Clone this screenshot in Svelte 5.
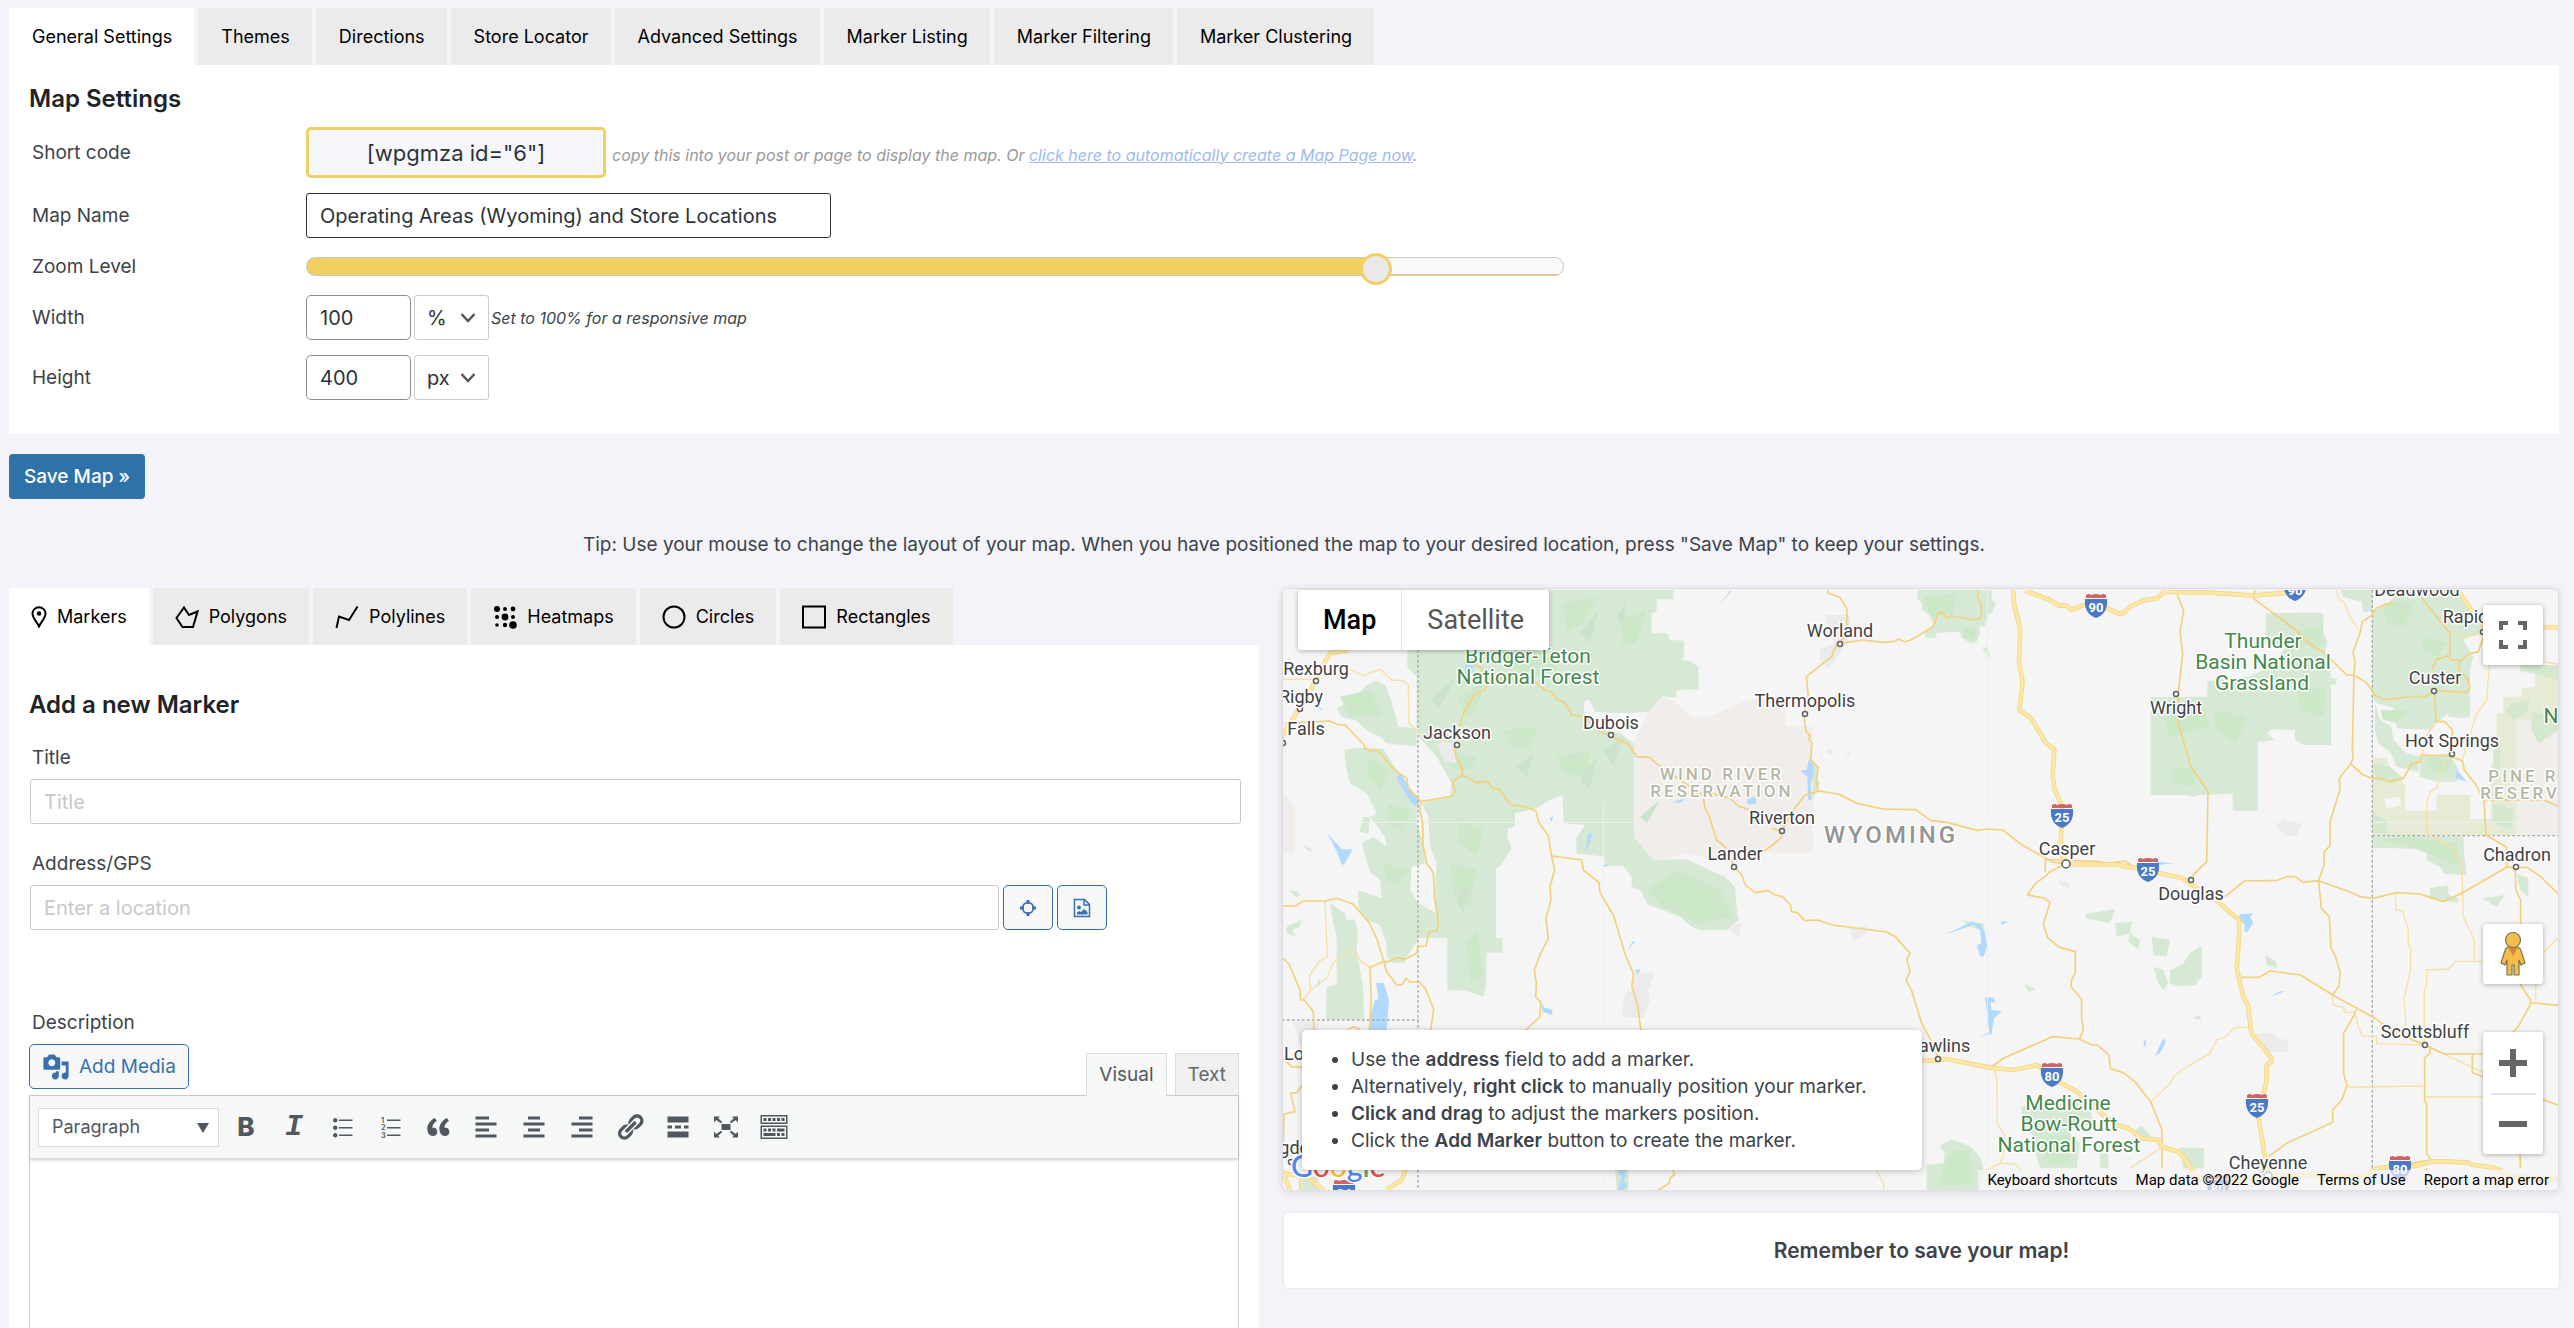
<script>
  const settingsTabs = [
    'General Settings', 'Themes', 'Directions', 'Store Locator',
    'Advanced Settings', 'Marker Listing', 'Marker Filtering', 'Marker Clustering'
  ];
  const featureTabs = ['Markers', 'Polygons', 'Polylines', 'Heatmaps', 'Circles', 'Rectangles'];

  let activeSetting = $state('General Settings');
  let activeFeature = $state('Markers');
  let mapName = $state('Operating Areas (Wyoming) and Store Locations');
  let zoom = $state(86);
  let width = $state('100');
  let height = $state('400');

  const heatDots = [
    [3, 3, 3], [11, 3, 2], [19, 3, 2.4],
    [3, 11, 2], [11, 11, 3.4], [19, 11, 2],
    [3, 19, 1.8], [11, 19, 2.2], [19, 19, 3.8]
  ];

  const tools = [
    { name: 'Bold', letter: 'B' },
    { name: 'Italic', letter: 'I' },
    { name: 'Bulleted list', d: 'M5.5 7C4.67 7 4 6.33 4 5.5 4 4.68 4.67 4 5.5 4 6.32 4 7 4.68 7 5.5 7 6.33 6.32 7 5.5 7zM8 5h9v1H8V5zm-2.5 7c-.83 0-1.5-.67-1.5-1.5C4 9.68 4.67 9 5.5 9c.82 0 1.5.68 1.5 1.5 0 .83-.68 1.5-1.5 1.5zM8 10h9v1H8v-1zm-2.5 7c-.83 0-1.5-.67-1.5-1.5 0-.82.67-1.5 1.5-1.5.82 0 1.5.68 1.5 1.5 0 .83-.68 1.5-1.5 1.5zM8 15h9v1H8v-1z' },
    { name: 'Numbered list', numbers: true, d: 'M8 5h9v1H8V5zM8 10h9v1H8v-1zM8 15h9v1H8v-1z' },
    { name: 'Blockquote', d: 'M9.49 13.22c0-.74-.2-1.38-.61-1.9-.62-.78-1.83-.88-2.53-.72-.29-1.65 1.11-3.75 2.92-4.65L7.88 4c-2.73 1.3-5.42 4.28-4.96 8.05C3.21 14.43 4.59 16 6.54 16c.85 0 1.56-.25 2.12-.75s.83-1.18.83-2.03zm8.05 0c0-.74-.2-1.38-.61-1.9-.63-.78-1.83-.88-2.53-.72-.29-1.65 1.11-3.75 2.92-4.65L15.93 4c-2.73 1.3-5.41 4.28-4.95 8.05.29 2.38 1.66 3.95 3.61 3.95.85 0 1.56-.25 2.12-.75s.83-1.18.83-2.03z' },
    { name: 'Align left', d: 'M12 5V3H3v2h9zm5 4V7H3v2h14zm-5 4v-2H3v2h9zm5 4v-2H3v2h14z' },
    { name: 'Align center', d: 'M14 5V3H6v2h8zm3 4V7H3v2h14zm-3 4v-2H6v2h8zm3 4v-2H3v2h14z' },
    { name: 'Align right', d: 'M17 5V3H8v2h9zm0 4V7H3v2h14zm0 4v-2H8v2h9zm0 4v-2H3v2h14z' },
    { name: 'Insert link', d: 'M17.74 2.76c1.68 1.69 1.68 4.41 0 6.1l-1.53 1.52c-1.12 1.12-2.7 1.47-4.14 1.09l2.62-2.61.76-.77.76-.76c.84-.84.84-2.2 0-3.04-.84-.85-2.2-.85-3.04 0l-.77.76-3.38 3.38c-.37-1.44-.02-3.02 1.1-4.14l1.52-1.53c1.69-1.68 4.42-1.68 6.1 0zM8.59 13.43l5.34-5.34c.42-.42.42-1.1 0-1.52-.44-.43-1.13-.39-1.53 0l-5.33 5.34c-.42.42-.42 1.1 0 1.52.44.43 1.13.39 1.52 0zm-.76 2.29l4.14-4.15c.38 1.44.03 3.02-1.09 4.14l-1.52 1.53c-1.69 1.68-4.41 1.68-6.1 0-1.68-1.68-1.68-4.42 0-6.1l1.53-1.52c1.12-1.12 2.7-1.47 4.14-1.1l-4.14 4.15c-.85.84-.85 2.2 0 3.05.84.84 2.2.84 3.04 0z' },
    { name: 'Read more', d: 'M17 7V3H3v4h14zM6 11V9H3v2h3zm6 0V9H8v2h4zm5 0V9h-3v2h3zm0 6v-4H3v4h14z' },
    { name: 'Fullscreen', d: 'M7 8h6v4H7zM2 3h4L4.800 4.200 7.500 6.600 6.600 7.500 3.500 5.300 2 7zM18 3h-4l1.200 1.200-2.700 2.400.9.9 3.100-2.200L18 7zM2 17h4l-1.200-1.200 2.700-2.400-.9-.9-3.100 2.200L2 13zM18 17h-4l1.200-1.200-2.700-2.400.9-.9 3.100 2.200L18 13z' },
    { name: 'Toolbar toggle', d: 'M19 2v6H1V2h18zm-1 5V3H2v4h16zM5 4v2H3V4h2zm3 0v2H6V4h2zm3 0v2H9V4h2zm3 0v2h-2V4h2zm3 0v2h-2V4h2zm2 5v9H1V9h18zm-1 8v-7H2v7h16zM5 11v2H3v-2h2zm3 0v2H6v-2h2zm3 0v2H9v-2h2zm6 0v2h-5v-2h5zm-6 3v2H3v-2h8zm3 0v2h-2v-2h2zm3 0v2h-2v-2h2z' }
  ];

  // Map features use a survey grid three units to the pixel, starting at (36, 60).
  const px = (u) => Math.round((u - 36) / 3);
  const py = (v) => Math.round((v - 60) / 3);

  const forests = [
    'M412 60H1210V88H1160V125L1145 130V190L1190 190 1200 210 1242 212V260L1235 268 1265 275 1285 290V358L1220 360V383L1180 378 1135 425 1040 430 975 425 957 388 940 395 945 440 1000 480 1050 490 1092 520V800L1150 870 1250 868 1330 905 1365 920 1395 950 1400 1015 1406 1050 1370 1080H1290L1265 1070 1230 1040 1180 1020 1135 1005 1110 960 1085 950V920L1060 888H1005L1003 860 920 850 918 805 945 765 880 760 878 675 840 690 800 715 735 730V770L715 775 712 800 725 835 690 890 678 895V1104H698V1148H650L648 1240 640 1280 590 1262 532 1260V1104H445V1000L500 1030 495 960 500 880 480 830 475 740 455 700 540 680 545 640 500 560 445 500V475L385 470 362 385 345 345 320 333 290 345 260 380 200 415 215 440 260 452 290 480 330 500 350 520 440 530V320L412 290Z',
    'M223 540L260 533 340 536 380 600 410 640 440 700V760L460 820 465 880 425 890 420 960 445 1000V1110L410 1160 405 1178H370L350 1160V1120L330 1065 290 1050 265 1010V960L335 985 330 930 300 905 275 820 310 800 350 830 360 920 345 800 300 740 320 730 290 670 240 640 230 600Z',
    'M280 740L300 740 295 790 268 785ZM57 962L78 962 92 975 80 982ZM50 1070L95 1050 90 1070 65 1080 80 1100 50 1090ZM100 825L130 840 120 846Z',
    'M180 998L225 1030 230 1050 255 1050 264 1090 260 1140 280 1260 282 1348 168 1348 170 1250 200 1245 200 1100 190 1060Z',
    'M1942 60H2165V90L2178 98 2168 125 2152 135 2145 168 2128 170 2130 190 2120 215 2105 220 2075 205 2070 185 2000 188 1998 203H1965V185L1990 165 1980 135 1955 120V100L1942 85ZM2138 238L2152 228 2162 268Z',
    'M1575 598L1605 585 1620 560 1645 600 1640 625 1650 640 1615 720 1605 650 1590 640Z',
    'M2987 130L3160 128V185L3172 215 3165 250 3180 255 3182 325 3200 328 3198 343 3183 345V525H3100L3075 510V480L3005 478 2990 490 3015 510 2963 516V722H2888V672L2780 675 2770 682 2750 675H2642V382L2812 380V333L2880 330 2935 320 2980 300 3010 290 3050 225 2987 220Z',
    'M3307 130L3315 120 3360 95 3380 60H3570L3600 120 3640 190 3600 200 3580 210 3610 260 3600 300V440L3580 445 3535 440V430L3505 455 3485 480 3380 475 3372 415 3320 400 3307 380ZM3210 60H3307V125L3280 125 3275 95 3220 80Z',
    'M3315 400L3330 450 3365 470 3370 510 3410 550 3450 560 3445 605 3380 590 3360 545 3325 520 3315 480ZM3450 560L3540 550 3565 600 3560 635H3500L3450 620Z',
    'M3307 797H3580L3583 860 3590 915 3525 912 3510 890 3470 870V840L3380 835H3307ZM3480 955L3535 945V975L3565 985 3565 1000 3480 985ZM3740 910L3775 925V980L3750 960Z',
    'M1970 1785L2020 1780 2025 1750 2008 1730 2045 1708 2100 1728 2130 1760 2140 1795 2130 1860H1970ZM2255 1610L2280 1600H2440L2465 1630V1660L2390 1680 2430 1720 2420 1795H2310L2300 1760 2290 1700 2255 1640ZM2490 1750H2515V1795H2490Z',
    'M2445 1032L2535 1018 2520 1060 2450 1045ZM2535 1060L2585 1055 2580 1090 2540 1100ZM2580 1090L2610 1110 2605 1140 2575 1115ZM2262 1243L2297 1255 2278 1267ZM2072 1050L2140 1060 2145 1085 2100 1070Z',
    'M2645 1100L2700 1110 2690 1160 2650 1155ZM2700 1200L2740 1180 2760 1150 2795 1125V1220L2775 1245 2730 1250 2700 1240ZM2650 1190L2680 1200 2695 1240 2680 1260 2665 1240ZM2985 1155L3020 1175V1195L2990 1185ZM2730 1733H2802V1795H2740ZM2595 1680L2615 1667 2645 1700H2600ZM3635 985L3705 975 3680 1010ZM2770 1345L2785 1335 2797 1350Z',
    'M1035 1800H1075V1860H1040ZM95 1820H145V1860H95Z'
  ];
  const woods = [
    'M560 380L640 340 620 420 590 440ZM700 260L820 240 860 300 760 330ZM880 100L980 80 940 160 890 190ZM1050 150L1130 120 1100 220 1060 230ZM520 540L620 560 600 600 540 590ZM700 480L800 470 780 540 720 530ZM860 560L960 540 950 620 880 610ZM560 740L640 780 620 860 570 820ZM540 880L620 900 600 1010 550 980ZM620 1080L640 1220 600 1240 590 1120ZM300 560L360 600 330 660 290 620ZM350 700L420 720 400 790 360 770ZM340 880L420 900 380 950 350 930ZM1130 960L1220 900 1350 960 1390 1040 1280 1060 1180 1010ZM210 380L300 360 340 440 240 440Z',
    'M2680 440L2800 400 2820 470 2700 500ZM2830 420L2930 440 2900 520 2840 480ZM3080 180L3160 170 3150 230 3090 220ZM3080 360L3170 350 3160 440 3090 420ZM2700 600L2780 590 2770 650 2710 640ZM3340 100L3440 90 3400 170 3350 160ZM3450 200L3530 220 3500 260 3460 240ZM3330 420L3420 420 3380 460 3340 450ZM3470 560L3550 570 3530 610 3480 600ZM3320 810L3420 800 3560 820 3570 890 3500 860 3420 830ZM1960 80L2060 70 2050 130 1980 140ZM2080 170L2120 180 2110 210 2080 200ZM2040 1740L2100 1740 2110 1840 2000 1850ZM2320 1700L2400 1690 2400 1780 2330 1780Z'
  ];
  const shades = [
    'M930 190L985 120 960 220ZM1040 140L1070 90 1060 170ZM480 390L560 320 510 410ZM1000 540L1060 500 1030 590ZM930 630L980 560 960 660ZM740 590L790 550 770 620ZM560 990L600 930 580 1030ZM1110 740L1170 690 1130 760Z',
    'M1665 135H1740V200L1710 250 1675 298 1650 270V240L1690 220ZM1065 1270L1090 1260V1208H1155L1135 1260 1140 1290 1120 1345 1055 1340ZM2955 1390H3010L3020 1405 3053 1410V1445H2990ZM3017 770L3040 745 3095 765 3080 797H3050ZM1665 545L1682 533 1687 552ZM1722 560L1745 540 1740 556ZM1375 1075L1415 1058 1408 1105ZM1738 1072L1790 1068 1790 1090 1750 1115ZM2365 930L2400 942 2395 953 2375 948ZM70 1355H150L130 1420H90Z'
  ];
  const reservations = [
    'M1092 520L1135 425 1180 375 1220 400 1265 440H1320L1420 395 1460 385H1545V470H1628V850L1400 850 1320 868 1250 850 1190 868 1150 870 1092 800Z',
    'M3740 450H3865V795H3740ZM36 660L75 710V848H36Z'
  ];
  const grasslands =
    'M3307 562L3350 565 3360 590 3405 645V722H3500V675H3600V747H3663V580L3680 575V430H3700V380H3755V355L3795 350V312L3750 305V285L3865 290V450H3740V795H3307Z';
  const grassWoods =
    'M3307 580L3360 590 3400 625 3370 640 3320 630ZM3307 730L3350 750 3350 790H3307ZM3720 400L3780 390 3770 430 3730 450 3710 425ZM3785 430L3865 425V480L3805 520 3785 480ZM3750 285H3865V330L3760 300ZM3670 700L3730 720 3725 780 3670 760ZM3670 540L3690 530V600L3670 610Z';
  const waters = [
    'M378 618L395 615 410 640 445 690V710L425 700 400 660ZM172 790L215 838 248 838 222 885 215 882 198 840ZM840 745L850 737 845 757ZM945 850L955 790 965 790 960 820ZM995 888L1020 880 1008 890ZM1205 698L1250 682 1230 698ZM585 280H608V310H585ZM143 408L157 418 150 420Z',
    'M318 1238L342 1240 357 1290 350 1380H300L303 1330 315 1290 325 1288ZM812 1295L822 1312 848 1320 845 1335 818 1325ZM1072 1142L1088 1113 1095 1115ZM1095 1200L1113 1198 1103 1212ZM140 1245L152 1222 145 1250ZM1045 1800H1068L1062 1830 1072 1850 1060 1860H1042L1055 1825Z',
    'M1590 602L1610 600 1618 565 1630 575V615L1622 640 1625 690 1615 690 1612 620ZM1432 685L1458 680V702H1432ZM1345 108L1380 62H1385ZM2020 1092L2055 1080 2085 1065 2105 1055 2130 1062 2145 1090 2152 1130 2140 1160 2130 1158 2120 1125 2135 1120 2130 1080 2110 1065 2050 1085ZM2192 1055L2218 1053 2195 1064ZM2145 1282L2170 1283 2177 1297 2160 1297 2165 1320 2195 1324 2172 1345 2165 1392 2130 1400 2158 1388Z',
    'M2910 1033L2950 1030 2940 1040 2950 1058 2930 1088 2922 1080 2925 1065 2905 1045ZM2870 1000L2900 1018ZM2655 1458L2680 1405 2688 1415 2670 1450ZM2620 1415L2630 1408 2625 1435ZM3000 1282L3025 1265 3045 1263ZM3560 600L3590 635 3558 625ZM2655 875L2710 880 2670 884ZM3690 98L3710 106Z'
  ];

  const lanes = [
    'M40 328H130M240 298L280 317 330 298 365 330 398 332 415 342 417 460 455 495 520 515',
    'M165 993L172 1160 150 1172 117 1218 122 1260 170 1225 190 1178 235 1145 255 1147 275 1175 300 1192M122 1260L100 1290',
    'M2172 1490L2180 1530 2182 1660 2203 1695 2198 1760 2190 1780 2235 1782 2260 1810M2190 1780L2130 1810M1820 1802L1843 1845 1838 1860',
    'M2642 1595L2702 1540 2710 1520 2735 1500 2820 1450 2840 1410 2872 1397 2892 1373 2940 1372M3231 1547L3240 1551 3460 1548M3464 1581H3640',
    'M3188 1275L3190 1305 3220 1312 3225 1327 3255 1327 3265 1370 3277 1397 3320 1400V1421L3465 1425 3640 1508',
    'M3377 970V1020L3398 1022 3415 1078V1125L3422 1135V1200L3402 1285 3408 1370M3463 1420V1260L3470 1245V1200L3535 1197 3558 1174H3640M3613 1174V1110L3580 1040 3575 880 3540 830 3475 797',
    'M3863 1105L3820 1147M3797 1230V1290M3200 60L3205 85 3225 100 3240 140 3265 180M3500 455L3470 495 3455 560M3525 570L3500 655 3480 665 3470 700V797M3575 575L3620 430 3650 390 3660 260',
    'M2580 1795L2670 1735M3540 180L3590 200 3640 190M3760 265L3865 283'
  ];
  const roads = [
    'M45 460L180 453 205 465 225 465 283 525 285 535 303 543 323 541 370 597 410 625 415 655 453 695 548 678 555 660 547 635 577 615 620 638 652 634 668 655 688 658 722 705 770 711 798 723 806 757 835 797 845 858 935 870 940 900 987 938 990 968 1030 1035 1068 1160 1090 1210 1086 1250 1103 1305 1113 1385',
    'M453 695L448 712 458 760 459 825 470 880 490 908 494 985 506 1060 500 1083H478L468 1128 443 1130 440 1150 405 1168 380 1163 355 1175H340L300 1192 304 1290 298 1380',
    'M577 615V597L558 560 552 525M570 470L580 430 615 372 645 360 655 335 630 290 610 285M680 325H780L825 360 842 363 860 388 885 398 905 435 945 440 990 485 1075 522 1100 560 1138 562 1165 585 1245 640 1300 680 1305 715 1318 740 1340 810 1370 835 1392 890',
    'M845 858L854 900 840 950 843 990 828 1045 835 1105 812 1150 793 1200 799 1240 797 1282 812 1295 810 1340 768 1380',
    'M40 1008L78 1008 97 993 165 993 200 985 250 1003 297 1057 320 1105 342 1175 350 1205 380 1245 397 1243 408 1224 420 1236H448L467 1257 491 1318 482 1380M40 1165L57 1182 90 1260 92 1290H103L130 1325 132 1380M40 1465L65 1490 97 1492M97 1545L80 1568 62 1570 75 1625 42 1632 40 1720M90 1820V1860M1210 1800L1213 1813 1200 1825 1198 1840 1165 1860M235 1378L250 1370 270 1378',
    'M1673 60L1675 70 1710 82 1731 118 1730 190 1710 220 1702 218 1685 260 1609 320 1615 375 1603 430 1603 450 1608 485 1620 497 1617 510 1626 517 1622 570 1645 592 1639 635 1645 663 1605 675 1570 720 1535 783 1533 805 1485 842 1410 870M1710 220L1780 210 1838 217 1875 214 1885 207 1905 216 1922 210 1990 170 2005 128H2018L2030 145 2042 138 2115 150 2135 142 2133 100 2122 80 2125 60',
    'M1645 663L1705 672 1760 700 1840 717 1937 719 1982 751 2030 757 2122 781 2152 777 2198 780 2258 826 2350 877 2388 880 2340 905 2325 920 2297 940 2272 975 2322 984 2340 998 2320 1063 2333 1103 2368 1132 2416 1145V1208L2405 1230 2403 1250 2435 1288V1345L2440 1380 2428 1408',
    'M1535 783L1505 775M1435 718L1405 708 1380 685 1325 670H1290M1392 890L1415 915 1427 947 1457 968 1495 962 1515 975 1537 980 1562 1005 1564 1025 1582 1028 1604 1052 1642 1050 1688 1065 1850 1086 1878 1102 1920 1150 1910 1168 1920 1205 1908 1231 1925 1262 1955 1360 1985 1415 2005 1465',
    'M2168 1488L2200 1465 2347 1400 2428 1407 2465 1425H2482L2516 1455 2522 1496 2560 1508 2595 1535 2642 1595 2676 1680V1795M2326 905V870L2380 870 2490 875 2510 880 2565 873 2590 890',
    'M2720 70L2741 122 2730 185 2738 250 2725 370V460L2763 592 2814 663 2810 875 2765 920M2950 85L3075 178 3105 210 3170 255 3230 315H3252L3290 338 3315 375 3345 389 3442 378 3462 382 3493 362 3590 368 3600 355 3595 330 3565 300 3568 275 3600 250 3625 245 3645 190',
    'M2958 60L2945 80M3370 95L3318 115 3307 135 3277 155 3270 190 3249 248 3255 275 3252 315 3247 540 3250 560 3242 582 3208 625 3210 658 3180 757V827L3163 845 3162 885 3146 932 3154 1015 3178 1040 3183 1135 3195 1155 3210 1205 3207 1248 3188 1275',
    'M3242 582L3280 615 3308 625H3335L3355 635 3400 625 3425 582 3450 575 3455 555 3540 558 3577 572 3583 600 3615 640 3642 690 3648 795 3710 832V892M3642 690H3820L3865 708M3455 85L3540 190V255L3500 268 3485 300M3530 255L3545 270H3568M3493 365L3498 455H3525L3547 480 3543 550',
    'M2865 980L2923 933 3020 931 3050 920H3075L3100 937 3146 932 3250 970 3270 980 3310 985 3378 968 3450 972 3520 995 3575 970 3710 892H3770L3810 918 3865 972M3735 892L3738 960 3752 990V1245L3782 1290 3780 1305 3745 1370 3640 1480M3782 1298L3865 1306',
    'M2915 1222H2968L3000 1203 3092 1215 3188 1275 3315 1345 3380 1390 3465 1425 3523 1452H3640M3258 1320L3250 1340 3221 1390V1510L3231 1547 3215 1590 3188 1620V1657L3050 1720 2995 1760M3480 1430V1450L3464 1463V1595L3470 1600V1750L3482 1768M3607 1452V1508L3865 1606M3750 1750L3752 1795M3470 1795V1860M3420 1780L3480 1770H3540'
  ];
  const highways = [
    'M235 240L180 250 165 275 135 335 88 415 30 510M36 1800L60 1860M40 1810L110 1820 160 1860M410 1790L395 1830 350 1860',
    'M2230 60L2232 100 2251 180 2247 280 2258 335 2248 420 2283 445 2330 522 2353 537 2348 615 2354 660 2375 705 2372 850 2388 880 2420 884 2540 884 2610 897 2740 925 2780 955 2845 995 2907 1050 2908 1090 2900 1195 2920 1280 2935 1310 2944 1390 3005 1465V1475L2990 1485V1530L2965 1640 2985 1760 2995 1810',
    'M2265 62L2340 90 2365 107H2390L2405 120 2440 105 2510 115 2545 130H2560L2580 110 2625 90 2660 86 2683 65 2820 68 2950 77 3050 68M3570 70L3600 115 3640 168 3865 172',
    'M1900 1470L1990 1472 2030 1467 2160 1493 2232 1500 2300 1485 2375 1540 2420 1565 2495 1630 2540 1665 2575 1675 2615 1705 2665 1710 2675 1730 2725 1745 2740 1760 2780 1820 2880 1840 2990 1815H3110L3280 1820 3320 1795 3380 1788H3440L3480 1775H3540L3595 1778 3610 1785 3670 1792 3730 1820 3865 1830'
  ];

  const towns = [
    { name: 'Rexburg', x: 138, y: 314, cx: 138, cy: 332 },
    { name: 'Rigby', x: 92, y: 399, cx: 90, cy: 418 },
    { name: 'Falls', x: 108, y: 494, cx: 40, cy: 520 },
    { name: 'Jackson', x: 562, y: 506, cx: 560, cy: 525 },
    { name: 'Dubois', x: 1024, y: 476, cx: 1023, cy: 496 },
    { name: 'Worland', x: 1710, y: 201, cx: 1709, cy: 222 },
    { name: 'Thermopolis', x: 1606, y: 411, cx: 1606, cy: 431 },
    { name: 'Riverton', x: 1535, y: 763, cx: 1536, cy: 783 },
    { name: 'Lander', x: 1394, y: 870, cx: 1392, cy: 890 },
    { name: 'Casper', x: 2390, y: 856, cx: 2388, cy: 881, big: true },
    { name: 'Deadwood', x: 3442, y: 77 },
    { name: 'Rapid City', x: 3640, y: 160, cx: 3640, cy: 185 },
    { name: 'Wright', x: 2719, y: 433, cx: 2719, cy: 372 },
    { name: 'Custer', x: 3495, y: 343, cx: 3493, cy: 364 },
    { name: 'Hot Springs', x: 3546, y: 532, cx: 3545, cy: 553 },
    { name: 'Chadron', x: 3741, y: 872, cx: 3739, cy: 892 },
    { name: 'Douglas', x: 2764, y: 990, cx: 2764, cy: 930 },
    { name: 'Scottsbluff', x: 3466, y: 1405, cx: 3466, cy: 1426 },
    { name: 'Cheyenne', x: 2995, y: 1796, cx: 2994, cy: 1818, big: true },
    { name: 'Rawlins', x: 2008, y: 1445, cx: 2004, cy: 1466 },
    { name: 'Logan', x: 118, y: 1470 },
    { name: 'Ogden', x: 70, y: 1752, cx: 62, cy: 1776 }
  ];
  const parks = [
    { name: 'Bridger-Teton', x: 774, y: 278 },
    { name: 'National Forest', x: 774, y: 341 },
    { name: 'Thunder', x: 2980, y: 233 },
    { name: 'Basin National', x: 2978, y: 296 },
    { name: 'Grassland', x: 2976, y: 359 },
    { name: 'Medicine', x: 2395, y: 1620 },
    { name: 'Bow-Routt', x: 2397, y: 1683 },
    { name: 'National Forest', x: 2397, y: 1747 },
    { name: 'N', x: 3842, y: 458 }
  ];
  const lands = [
    { name: 'WIND RIVER', x: 1355, y: 630 },
    { name: 'RESERVATION', x: 1355, y: 681 },
    { name: 'PINE RIDGE', x: 3834, y: 636 },
    { name: 'RESERVATION', x: 3846, y: 687 }
  ];
  const shields = [
    { n: '90', x: 2479, y: 107 }, { n: '90', x: 3075, y: 58 },
    { n: '25', x: 2375, y: 738 }, { n: '25', x: 2634, y: 899 },
    { n: '80', x: 2346, y: 1515 }, { n: '25', x: 2962, y: 1609 },
    { n: '80', x: 3390, y: 1793 }, { n: '80', x: 2845, y: 1850 },
    { n: '84', x: 222, y: 1866 }
  ];
</script>

{#snippet featureIcon(name)}
  {#if name === 'Markers'}
    <svg class="pin" viewBox="0 0 16 22" aria-hidden="true"><path d="M8 20.500C6 16 1.500 12 1.500 7.500a6.500 6.200 0 0 1 13 0C14.500 12 10 16 8 20.500z" fill="none" stroke="#000" stroke-width="2" /><circle cx="8" cy="7.500" r="2.300" /></svg>
  {:else}
    <svg class="shape" viewBox="0 0 24 24" aria-hidden="true">
      {#if name === 'Polygons'}
        <path d="M9 2.500L14 10 22.500 6.500 18 22H7.500L1.500 13Z" fill="none" stroke="#000" stroke-width="2" />
      {:else if name === 'Polylines'}
        <path d="M1.500 23L4 11.500 14 15 22.500 1.500" fill="none" stroke="#000" stroke-width="2" />
      {:else if name === 'Heatmaps'}
        {#each heatDots as [x, y, r]}<circle cx={x + 1} cy={y + 1} {r} />{/each}
      {:else if name === 'Circles'}
        <circle cx="12" cy="12" r="10.500" fill="none" stroke="#000" stroke-width="2" />
      {:else}
        <rect x="1" y="1.500" width="22" height="21" fill="none" stroke="#000" stroke-width="2" />
      {/if}
    </svg>
  {/if}
{/snippet}

{#snippet chevron()}
  <svg class="chevron" viewBox="0 0 16 12" aria-hidden="true"><path d="M1.500 2L8 9 14.500 2" fill="none" stroke="#555" stroke-width="2.500" /></svg>
{/snippet}

<div class="page">
  <nav class="tabs" aria-label="Map settings">
    {#each settingsTabs as tab}
      <button type="button" class="tab" class:active={tab === activeSetting} onclick={() => (activeSetting = tab)}>{tab}</button>
    {/each}
  </nav>

  <section class="panel settings">
    <h2>Map Settings</h2>
    <div class="rows">
      <div class="row">
        <label for="shortcode">Short code</label>
        <input id="shortcode" class="shortcode" type="text" readonly value={'[wpgmza id="6"]'} />
        <em class="hint muted">copy this into your post or page to display the map. Or <a href="#create">click here to automatically create a Map Page now</a>.</em>
      </div>
      <div class="row">
        <label for="map-name">Map Name</label>
        <input id="map-name" class="field name" type="text" bind:value={mapName} />
      </div>
      <div class="row zoom-row">
        <label for="zoom">Zoom Level</label>
        <input id="zoom" class="slider" type="range" min="0" max="100" bind:value={zoom} style="--fill: {zoom}%" />
      </div>
      <div class="row">
        <label for="map-width">Width</label>
        <input id="map-width" class="field size" type="text" bind:value={width} />
        <span class="pick"><select aria-label="Width unit"><option>%</option><option>px</option></select>{@render chevron()}</span>
        <em class="hint">Set to 100% for a responsive map</em>
      </div>
      <div class="row">
        <label for="map-height">Height</label>
        <input id="map-height" class="field size" type="text" bind:value={height} />
        <span class="pick"><select aria-label="Height unit"><option>px</option><option>%</option></select>{@render chevron()}</span>
      </div>
    </div>
  </section>

  <button type="button" class="save">Save Map »</button>
  <p class="tip">Tip: Use your mouse to change the layout of your map. When you have positioned the map to your desired location, press "Save Map" to keep your settings.</p>

  <div class="columns">
    <div class="left">
      <nav class="tabs" aria-label="Map features">
        {#each featureTabs as tab}
          <button type="button" class="tab feature" class:active={tab === activeFeature} onclick={() => (activeFeature = tab)}>
            {@render featureIcon(tab)}{tab}
          </button>
        {/each}
      </nav>
      <section class="panel marker">
        <h2>Add a new Marker</h2>
        <label class="above" for="title">Title</label>
        <input id="title" class="field soft" type="text" placeholder="Title" />
        <label class="above next" for="address">Address/GPS</label>
        <div class="address">
          <input id="address" class="field soft" type="text" placeholder="Enter a location" />
          <button type="button" class="outline square" aria-label="Use my location">
            <svg viewBox="0 0 18 18" aria-hidden="true"><circle cx="9" cy="9" r="5.500" fill="none" stroke="currentColor" stroke-width="1.500" /><path d="M9 1v4M9 13v4M1 9h4M13 9h4" stroke="currentColor" stroke-width="3" /></svg>
          </button>
          <button type="button" class="outline square" aria-label="Read location from a photo">
            <svg viewBox="0 0 18 20" aria-hidden="true"><path d="M1.500 1.500h10l5 5v12h-15zM11 1.500V7h5.500" fill="none" stroke="currentColor" stroke-width="1.500" /><circle cx="6" cy="9.500" r="2" fill="currentColor" /><path d="M4 16.500v-2l2-1.500 2 1 3-3 3.500 3v2.500z" fill="currentColor" /></svg>
          </button>
        </div>
        <label class="above last" for="description">Description</label>
        <div class="editor-head">
          <button type="button" class="outline media">
            <svg viewBox="0 0 20 20" aria-hidden="true"><path fill="currentColor" d="M13 11V4c0-.55-.45-1-1-1h-1.670L9 1H5L3.670 3H2c-.55 0-1 .45-1 1v7c0 .55.45 1 1 1h10c.55 0 1-.45 1-1zM7 4.500c1.380 0 2.500 1.120 2.500 2.500S8.380 9.500 7 9.500 4.500 8.380 4.500 7 5.620 4.500 7 4.500zM14 6h5v10.500c0 1.380-1.120 2.500-2.500 2.500S14 17.880 14 16.500s1.120-2.500 2.500-2.500c.17 0 .34.02.5.05V9h-3V6zm-4 8.050V13h2v3.500c0 1.380-1.120 2.500-2.500 2.500S7 17.880 7 16.500 8.120 14 9.500 14c.17 0 .34.02.5.05z" /></svg>Add Media
          </button>
          <div class="modes">
            <button type="button" class="mode on">Visual</button>
            <button type="button" class="mode">Text</button>
          </div>
        </div>
        <div class="editor">
          <div class="toolbar">
            <span class="pick para"><select aria-label="Text style"><option>Paragraph</option><option>Heading 1</option></select><svg class="arrow" viewBox="0 0 12 10" aria-hidden="true"><path d="M0 0h12L6 10z" fill="#50575e" /></svg></span>
            {#each tools as tool}
              <button type="button" class="tool" aria-label={tool.name}>
                {#if tool.letter}
                  <span class="letter" class:slanted={tool.letter === 'I'}>{tool.letter}</span>
                {:else}
                  <svg viewBox="0 0 20 20" aria-hidden="true">
                    <path d={tool.d} />
                    {#if tool.numbers}
                      <g class="digits"><text x="4" y="7">1</text><text x="4" y="12">2</text><text x="4" y="17">3</text></g>
                    {/if}
                  </svg>
                {/if}
              </button>
            {/each}
          </div>
          <textarea id="description"></textarea>
        </div>
      </section>
    </div>

    <div class="right">
      <div class="map">
        <svg class="canvas" viewBox="1 0 1275 600" preserveAspectRatio="xMinYMin slice" role="img" aria-label="Map of Wyoming">
          <g transform="scale(.33333) translate(-36 -60)">
            <path d={grasslands} fill="#e6ebd5" />
            {#each forests as d}<path {d} fill="#d6e9d4" />{/each}
            {#each reservations as d}<path {d} fill="#f0edea" />{/each}
            <path d="M3343 685L3390 680 3395 705 3350 715Z" fill="#f5f5f5" />
            {#each woods as d}<path {d} fill="#cde8c9" />{/each}
            <path d={grassWoods} fill="#d3e8cd" />
            <path d={shades[0]} fill="#cce2ca" />
            <path d={shades[1]} fill="#ebebeb" />
            <path d="M500 520L550 515 560 580 525 575Z" fill="#ebebeb" />
            {#each waters as d}<path {d} fill="#b1d9fd" />{/each}
            <path class="grid" d="M36 757H3865M1000 700V1860M2152 60V1860" />
            <path class="border" d="M444 60V1860M36 1350H444M3307 60V1860M3307 797H3865" />
            {#each lanes as d}<path {d} class="lane" />{/each}
            {#each roads as d}<path {d} class="road" />{/each}
            {#each highways as d}<path {d} class="casing" />{/each}
            {#each highways as d}<path {d} class="highway" />{/each}
          </g>
          {#each shields as s}
            <g transform="translate({px(s.x)} {py(s.y)})">
              <path d="M-10-11Q-7-13-5-11 0-13 5-11 7-13 10-11L10-8H-10Z" fill="#cc6664" />
              <path d="M-11-7H11C12 3 8 9 0 12-8 9-12 3-11-7Z" fill="#4a7ac6" />
              <text class="shield" y="6">{s.n}</text>
            </g>
          {/each}
          {#each towns as t}
            {#if t.cx}<circle class="dot" cx={px(t.cx)} cy={py(t.cy)} r={t.big ? 4 : 2.5} />{/if}
            <text class="town" x={px(t.x)} y={py(t.y)}>{t.name}</text>
          {/each}
          {#each parks as p}<text class="park" x={px(p.x)} y={py(p.y)}>{p.name}</text>{/each}
          {#each lands as l}<text class="land" x={px(l.x)} y={py(l.y)}>{l.name}</text>{/each}
          <text class="state" x={px(1863)} y={py(820)}>WYOMING</text>
          <text class="google" x="9" y="587"><tspan fill="#4f86ec">G</tspan><tspan fill="#dd5144">o</tspan><tspan fill="#f4bf3f">o</tspan><tspan fill="#4f86ec">g</tspan><tspan fill="#58a65c">l</tspan><tspan fill="#dd5144">e</tspan></text>
        </svg>

        <div class="types">
          <button type="button" class="on">Map</button><button type="button">Satellite</button>
        </div>
        <button type="button" class="control full" aria-label="Toggle fullscreen view">
          <svg viewBox="0 0 28 28" aria-hidden="true"><path d="M2 9V2h7M19 2h7v7M26 19v7h-7M9 26H2v-7" fill="none" stroke="#666" stroke-width="4" /></svg>
        </button>
        <div class="stack">
          <button type="button" class="control" aria-label="Street View">
            <svg class="man" viewBox="0 0 26 46" aria-hidden="true">
              <path d="M8 16L5.500 18 1 32l4 2 2-5v15h5V34h2v10h5V29l2 5 4-2-4.500-14-2.500-2z" fill="#f2bd4b" stroke="#7b7256" stroke-width="1.200" />
              <path d="M8 16h10l-5 9z" fill="#d9853b" />
              <circle cx="13" cy="9" r="7.500" fill="#f2bd4b" stroke="#7b7256" stroke-width="1.200" />
            </svg>
          </button>
          <div class="zooms">
            <button type="button" aria-label="Zoom in"><svg viewBox="0 0 28 28" aria-hidden="true"><path d="M0 14h28M14 0v28" stroke="#666" stroke-width="6" /></svg></button>
            <button type="button" aria-label="Zoom out"><svg viewBox="0 0 28 28" aria-hidden="true"><path d="M0 14h28" stroke="#666" stroke-width="6" /></svg></button>
          </div>
        </div>
        <ul class="help">
          <li>Use the <b>address</b> field to add a marker.</li>
          <li>Alternatively, <b>right click</b> to manually position your marker.</li>
          <li><b>Click and drag</b> to adjust the markers position.</li>
          <li>Click the <b>Add Marker</b> button to create the marker.</li>
        </ul>
        <div class="credits">
          <button type="button">Keyboard shortcuts</button>
          <span>Map data ©2022 Google</span>
          <a href="#terms">Terms of Use</a>
          <a href="#report">Report a map error</a>
        </div>
      </div>
      <p class="remember">Remember to save your map!</p>
    </div>
  </div>
</div>

<style>
  :global(body) {
    background: #f4f3f9;
  }
  .page {
    box-sizing: border-box;
    display: flex;
    flex-direction: column;
    min-height: 100vh;
    padding: 8px 15px 0 9px;
    color: #3c434a;
    font-family: Inter, "Liberation Sans", sans-serif;
    font-size: 19px;
    line-height: 28px;
  }
  .page *,
  .page *::before {
    box-sizing: border-box;
  }
  button,
  input,
  select,
  textarea {
    margin: 0;
    font: inherit;
    color: inherit;
  }
  button {
    padding: 0;
    border: 0;
    background: none;
    cursor: pointer;
    white-space: nowrap;
  }
  svg {
    display: block;
  }
  h2 {
    margin: 0;
    color: #1d2327;
    font-size: 24px;
    font-weight: 600;
    line-height: 32px;
  }
  .tabs {
    display: flex;
    gap: 4px;
  }
  .tab {
    display: flex;
    align-items: center;
    height: 57px;
    padding: 0 22px 0 23px;
    background: #ebebeb;
    color: #000;
    font-size: 18px;
    font-weight: 400;
  }
  .tab.active {
    background: #fff;
  }
  .feature {
    gap: 10px;
    padding: 0 22px;
  }
  .pin {
    width: 16px;
    height: 22px;
  }
  .shape {
    width: 24px;
    height: 24px;
  }
  .panel {
    background: #fff;
  }
  .settings {
    padding: 18px 20px 34px;
  }
  .rows {
    display: flex;
    flex-direction: column;
    gap: 15px;
    margin-top: 12px;
  }
  .row {
    display: flex;
    align-items: center;
  }
  .row label {
    width: 277px;
    padding-left: 3px;
  }
  .zoom-row {
    height: 27px;
  }
  .shortcode {
    width: 300px;
    height: 51px;
    border: 3px solid #f2cf61;
    border-radius: 5px;
    background: #f5f7fc;
    color: #2c3338;
    font-size: 22px;
    text-align: center;
  }
  .hint {
    margin-left: 2px;
    font-size: 16px;
  }
  .hint.muted {
    margin-left: 6px;
    padding-top: 4px;
    color: #999;
  }
  .hint a {
    color: #9dbaf0;
  }
  .field {
    height: 45px;
    padding: 0 13px;
    border: 1px solid #8c8f94;
    border-radius: 5px;
    background: #fff;
    color: #2c3338;
    font-size: 20px;
  }
  .field.name {
    width: 525px;
    border-color: #2c3338;
    border-radius: 3px;
  }
  .field.size {
    width: 105px;
    margin-right: 3px;
  }
  .field.soft {
    width: 100%;
    border-color: #c8c8c8;
    border-radius: 3px;
  }
  .field.soft::placeholder {
    color: #c8c8c8;
    opacity: 1;
  }
  .pick {
    position: relative;
    display: flex;
  }
  select {
    appearance: none;
    width: 75px;
    height: 45px;
    padding: 0 12px;
    border: 1px solid #ccc;
    border-radius: 3px;
    background: #fff;
    color: #2c3338;
    font-size: 20px;
  }
  .chevron,
  .arrow {
    position: absolute;
    top: 50%;
    right: 13px;
    width: 16px;
    height: 12px;
    margin-top: -6px;
    pointer-events: none;
  }
  .slider {
    appearance: none;
    width: 1258px;
    height: 19px;
    background: none;
  }
  .slider::-webkit-slider-runnable-track {
    height: 19px;
    border: 1px solid #c9c9c9;
    border-radius: 9px;
    background: linear-gradient(90deg, #f2cf61 var(--fill), transparent var(--fill)),
      linear-gradient(#f9f9f9 16px, #f2cf61 16px);
  }
  .slider::-webkit-slider-thumb {
    appearance: none;
    width: 32px;
    height: 32px;
    margin-top: -5px;
    border: 3px solid #f2cf61;
    border-radius: 50%;
    background: #e9e9e9;
  }
  .save {
    align-self: flex-start;
    height: 45px;
    margin-top: 20px;
    padding: 0 15px;
    border-radius: 4px;
    background: #2e72a8;
    color: #fff;
    font-weight: 500;
  }
  .tip {
    margin: 32px 0 29px;
    text-align: center;
  }
  .columns {
    display: grid;
    flex: 1;
    grid-template-columns: minmax(0, 1250fr) minmax(0, 1277fr);
    gap: 23px;
  }
  .left {
    display: flex;
    flex-direction: column;
  }
  .marker {
    display: flex;
    flex: 1;
    flex-direction: column;
    padding: 44px 20px 0;
  }
  .above {
    align-self: flex-start;
    margin: 23px 0 7px 3px;
  }
  .above.next {
    margin-top: 26px;
  }
  .above.last {
    margin-top: 79px;
  }
  .marker > .field,
  .address {
    margin-left: 1px;
    width: calc(100% + 1px);
  }
  .address {
    display: flex;
    gap: 4px;
    width: 89%;
  }
  .outline {
    display: flex;
    align-items: center;
    justify-content: center;
    height: 45px;
    border: 1px solid #2f6fb0;
    border-radius: 5px;
    background: #f6f7f7;
    color: #3a70b0;
  }
  .square {
    flex: 0 0 50px;
  }
  .square svg {
    width: 18px;
    height: 20px;
  }
  .media {
    gap: 9px;
    padding: 0 12px;
  }
  .media svg {
    width: 28px;
    height: 28px;
  }
  .editor-head {
    display: flex;
    align-items: flex-end;
    justify-content: space-between;
  }
  .editor-head .media {
    margin-bottom: 6px;
  }
  .modes {
    display: flex;
    gap: 8px;
    z-index: 1;
  }
  .mode {
    height: 42px;
    padding: 0 12px;
    border: 1px solid #dcdcde;
    border-bottom: 0;
    background: #f0f0f1;
    color: #646970;
  }
  .mode.on {
    height: 43px;
    margin-bottom: -1px;
    background: #f6f7f7;
    color: #50575e;
  }
  .editor {
    display: flex;
    flex: 1;
    flex-direction: column;
    border: 1px solid #ccd0d4;
    border-bottom: 0;
  }
  .toolbar {
    display: flex;
    align-items: center;
    height: 63px;
    padding-left: 8px;
    border-bottom: 1px solid #dcdcde;
    background: #f6f7f7;
    box-shadow: 0 1px 3px rgba(0, 0, 0, 0.2);
  }
  .para {
    margin-right: 3px;
  }
  .para select {
    width: 181px;
    height: 39px;
    padding: 0 13px;
    border-color: #dcdcde;
    border-radius: 0;
    color: #50575e;
    font-size: 18px;
  }
  .arrow {
    right: 10px;
    width: 12px;
    height: 10px;
    margin-top: -4px;
  }
  .tool {
    display: flex;
    align-items: center;
    justify-content: center;
    width: 48px;
    height: 48px;
    color: #50575e;
  }
  .tool svg {
    width: 30px;
    height: 30px;
    fill: #50575e;
  }
  .digits {
    font-size: 5px;
    font-weight: 600;
  }
  .letter {
    font-size: 26px;
    font-weight: 800;
  }
  .slanted {
    font-family: "Liberation Mono", monospace;
    font-size: 30px;
    font-style: italic;
    font-weight: 700;
  }
  textarea {
    display: block;
    flex: 1;
    min-height: 160px;
    width: 100%;
    padding: 12px;
    border: 0;
    outline: 0;
    resize: none;
    background: transparent;
  }
  .map {
    position: relative;
    height: 602px;
    padding-top: 1px;
    overflow: hidden;
    border: 1px solid #dcdce0;
    border-bottom: 0;
    border-radius: 5px;
    background: #f5f5f5;
    font-family: Roboto, "Liberation Sans", sans-serif;
  }
  .right {
    display: flex;
    flex-direction: column;
  }
  .map,
  .remember {
    box-shadow: 0 2px 8px rgba(0, 0, 0, 0.12);
  }
  .canvas {
    width: 100%;
    height: 100%;
  }
  .canvas path {
    stroke-linejoin: round;
  }
  .canvas .lane {
    fill: none;
    stroke: #f8e0a5;
    stroke-width: 4;
  }
  .canvas .road {
    fill: none;
    stroke: #f3d07c;
    stroke-width: 5;
  }
  .canvas .casing {
    fill: none;
    stroke: #f2d888;
    stroke-width: 14;
  }
  .canvas .highway {
    fill: none;
    stroke: #fde7a6;
    stroke-width: 9;
  }
  .canvas .border {
    fill: none;
    stroke: #a8a8a8;
    stroke-dasharray: 8 7;
    stroke-width: 4;
  }
  .canvas .grid {
    fill: none;
    stroke: #f0f0f0;
    stroke-width: 3;
  }
  .dot {
    fill: #fff;
    stroke: #616161;
    stroke-width: 1.5;
  }
  .canvas text {
    text-anchor: middle;
    paint-order: stroke;
    stroke: #fff;
    stroke-width: 3;
    stroke-linejoin: round;
  }
  .town {
    fill: #3f4144;
    font-size: 18px;
  }
  .park {
    fill: #43884c;
    font-size: 21px;
  }
  .land {
    fill: #b5b7a3;
    font-size: 17px;
    font-weight: 500;
    letter-spacing: 3px;
  }
  .state {
    fill: #949494;
    font-size: 24px;
    font-weight: 500;
    letter-spacing: 3px;
  }
  .canvas .shield {
    fill: #fff;
    stroke: none;
    font-size: 13px;
    font-weight: 700;
  }
  .canvas .google {
    font-family: Lato, sans-serif;
    font-size: 30px;
    font-weight: 500;
    text-anchor: start;
  }
  .types {
    position: absolute;
    top: 1px;
    left: 15px;
    display: flex;
    border-radius: 3px;
    background: #fff;
    box-shadow: 0 1px 5px rgba(0, 0, 0, 0.3);
  }
  .types button {
    height: 60px;
    padding: 0 25px;
    color: #565656;
    font-size: 27px;
  }
  .types .on {
    border-right: 1px solid #e6e6e6;
    color: #000;
    font-weight: 500;
  }
  .control,
  .zooms {
    width: 60px;
    border-radius: 3px;
    background: #fff;
    box-shadow: 0 1px 5px rgba(0, 0, 0, 0.3);
  }
  .control {
    display: grid;
    place-items: center;
    height: 60px;
  }
  .control svg,
  .zooms svg {
    width: 28px;
    height: 28px;
  }
  .control .man {
    width: 26px;
    height: 46px;
  }
  .full {
    position: absolute;
    top: 16px;
    right: 15px;
  }
  .stack {
    position: absolute;
    right: 15px;
    bottom: 36px;
    display: grid;
    gap: 48px;
  }
  .zooms button {
    display: grid;
    place-items: center;
    width: 100%;
    height: 61px;
  }
  .zooms button + button {
    background: linear-gradient(#e6e6e6, #e6e6e6) center top / 45px 2px no-repeat;
  }
  .help {
    position: absolute;
    bottom: 20px;
    left: 19px;
    width: 620px;
    margin: 0;
    padding: 16px 0 16px 49px;
    border-radius: 5px;
    background: #fff;
    box-shadow: 0 1px 6px rgba(0, 0, 0, 0.25);
    font-family: Inter, sans-serif;
    line-height: 27px;
  }
  .help b {
    font-weight: 600;
  }
  .credits {
    position: absolute;
    right: 0;
    bottom: 0;
    display: flex;
    gap: 18px;
    padding: 0 9px;
    background: rgba(245, 245, 245, 0.7);
    color: #000;
    font-size: 15px;
    line-height: 20px;
  }
  .credits a {
    color: #000;
    text-decoration: none;
  }
  .remember {
    margin: 23px 0 0 2px;
    padding: 24px;
    border-radius: 4px;
    background: #fff;
    box-shadow: 0 0 3px rgba(0, 0, 0, 0.12);
    font-size: 21px;
    font-weight: 600;
    line-height: 27px;
    text-align: center;
  }
</style>
